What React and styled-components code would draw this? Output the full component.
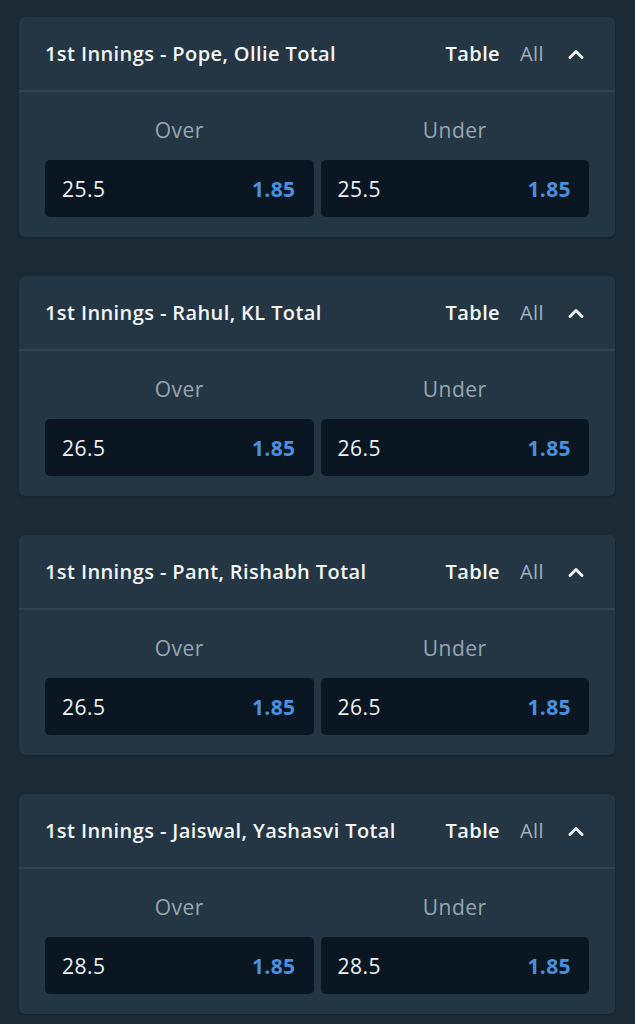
import React from "react";
import styled, { createGlobalStyle } from "styled-components";

const Global = createGlobalStyle`
  html, body { margin: 0; padding: 0; background: #1c2a36; }
  body { font-family: "Open Sans", Lato, "Liberation Sans", sans-serif; -webkit-font-smoothing: antialiased; }
`;

const Page = styled.div`
  display: flex;
  flex-direction: column;
  gap: 39px;
  padding: 17px 20px 20px 19px;
  background: #1c2a36;
  min-height: 1024px;
  box-sizing: border-box;
`;

const Card = styled.section`
  background: #243643;
  border-radius: 6px;
  box-shadow: 0 1px 2px rgba(0, 0, 0, 0.25);
  overflow: hidden;
`;

const Header = styled.div`
  height: 73px;
  display: flex;
  align-items: center;
  padding: 0 30px 0 26px;
  border-bottom: 2px solid #2f4352;
`;

const Title = styled.h3`
  flex: 1;
  margin: 0;
  font-size: 20px;
  font-weight: 600;
  color: #f3f6f8;
  letter-spacing: 0.4px;
`;

const Actions = styled.div`
  display: flex;
  align-items: center;
  gap: 20px;
`;

const Action = styled.span`
  font-size: 20px;
  letter-spacing: 0.4px;
  font-weight: ${(p) => (p.$active ? 600 : 400)};
  color: ${(p) => (p.$active ? "#f3f6f8" : "#a3afbd")};
`;

const Chevron = styled.svg`
  width: 18px;
  height: 12px;
  margin-left: 3px;
`;

const Body = styled.div`
  padding: 24px 26px 20px;
  display: grid;
  grid-template-columns: 1fr 1fr;
  column-gap: 7px;
  row-gap: 16px;
`;

const ColLabel = styled.div`
  text-align: center;
  font-size: 21px;
  letter-spacing: 0.5px;
  color: #98a6b3;
  line-height: 28px;
`;

const Outcome = styled.button`
  height: 57px;
  border: none;
  border-radius: 5px;
  background: #0a1723;
  display: flex;
  align-items: center;
  justify-content: space-between;
  padding: 0 18px 0 17px;
  font-family: inherit;
  cursor: pointer;
`;

const Line = styled.span`
  font-size: 21px;
  letter-spacing: 0.5px;
  color: #eef2f5;
`;

const Price = styled.span`
  font-size: 21px;
  letter-spacing: 0.4px;
  font-weight: 700;
  color: #4a90df;
`;

const markets = [
  { name: "Pope, Ollie", line: "25.5" },
  { name: "Rahul, KL", line: "26.5" },
  { name: "Pant, Rishabh", line: "26.5" },
  { name: "Jaiswal, Yashasvi", line: "28.5" },
];

function Market({ name, line }) {
  return (
    <Card>
      <Header>
        <Title>1st Innings - {name} Total</Title>
        <Actions>
          <Action $active>Table</Action>
          <Action>All</Action>
          <Chevron viewBox="0 0 18 12">
            <path d="M3 9.5 L9 3.5 L15 9.5" fill="none" stroke="#eef2f5" strokeWidth="3" strokeLinecap="round" strokeLinejoin="round" />
          </Chevron>
        </Actions>
      </Header>
      <Body>
        <ColLabel>Over</ColLabel>
        <ColLabel>Under</ColLabel>
        <Outcome>
          <Line>{line}</Line>
          <Price>1.85</Price>
        </Outcome>
        <Outcome>
          <Line>{line}</Line>
          <Price>1.85</Price>
        </Outcome>
      </Body>
    </Card>
  );
}

export default function App() {
  return (
    <>
      <Global />
      <Page>
        {markets.map((m) => (
          <Market key={m.name} {...m} />
        ))}
      </Page>
    </>
  );
}
